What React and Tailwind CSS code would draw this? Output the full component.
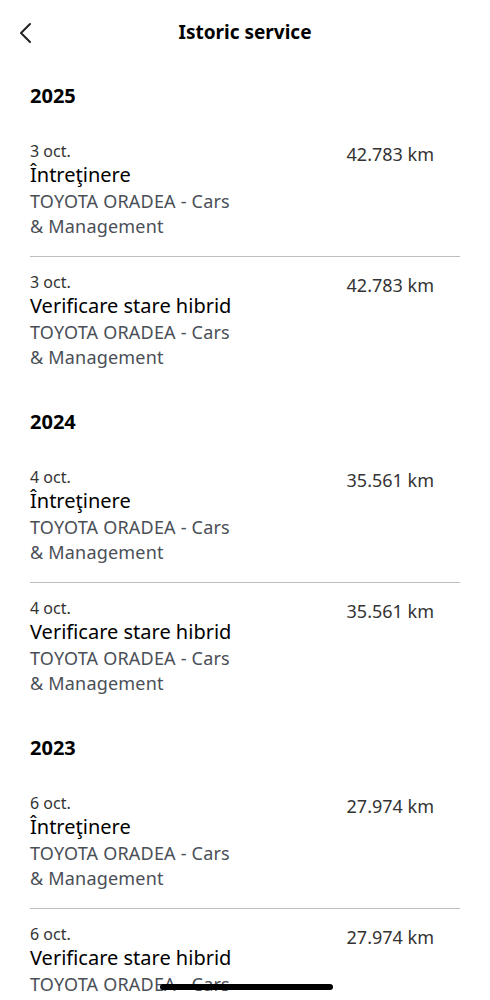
import React from 'react';

const history = [
  {
    year: '2025',
    items: [
      { date: '3 oct.', title: 'Întreţinere', km: '42.783 km' },
      { date: '3 oct.', title: 'Verificare stare hibrid', km: '42.783 km' },
    ],
  },
  {
    year: '2024',
    items: [
      { date: '4 oct.', title: 'Întreţinere', km: '35.561 km' },
      { date: '4 oct.', title: 'Verificare stare hibrid', km: '35.561 km' },
    ],
  },
  {
    year: '2023',
    items: [
      { date: '6 oct.', title: 'Întreţinere', km: '27.974 km' },
      { date: '6 oct.', title: 'Verificare stare hibrid', km: '27.974 km' },
    ],
  },
];

function ServiceRow({ item }) {
  return (
    <div className="flex justify-between pt-[15px] pb-[17px]">
      <div>
        <p className="text-[16px] leading-[20px] text-[#333]">{item.date}</p>
        <p className="text-[20px] leading-[28px] text-black">{item.title}</p>
        <p className="text-[18px] leading-[25px] tracking-[0.2px] text-[#4a4f57]">TOYOTA ORADEA - Cars</p>
        <p className="text-[18px] leading-[25px] tracking-[0.2px] text-[#4a4f57]">&amp; Management</p>
      </div>
      <p className="pt-[2px] pr-[26px] text-[18px] leading-[22px] text-[#333]">{item.km}</p>
    </div>
  );
}

export default function App() {
  return (
    <div
      className="relative h-[1000px] w-full overflow-hidden bg-white"
      style={{ fontFamily: '"Noto Sans", Lato, sans-serif' }}
    >
      <header className="relative flex h-[61px] items-center justify-center">
        <button className="absolute left-[14px] top-[18px] p-1 text-[#222]">
          <svg width="14" height="22" viewBox="0 0 14 22" fill="none">
            <path d="M12 2 3 11l9 9" stroke="currentColor" strokeWidth="2" strokeLinecap="round" strokeLinejoin="round" />
          </svg>
        </button>
        <h1 className="pt-[3px] text-[19px] leading-[26px] font-bold text-black">Istoric service</h1>
      </header>

      {history.map((section) => (
        <section key={section.year} className="px-[30px]">
          <h2 className="pt-[23px] pb-[18px] text-[20px] leading-[24px] font-bold text-black">{section.year}</h2>
          {section.items.map((item, i) => (
            <div key={i}>
              {i > 0 && <div className="h-px bg-[#bdbdbd]" />}
              <ServiceRow item={item} />
            </div>
          ))}
        </section>
      ))}

      <div className="absolute bottom-[10px] left-[160px] h-[6px] w-[173px] rounded-full bg-black" />
    </div>
  );
}
